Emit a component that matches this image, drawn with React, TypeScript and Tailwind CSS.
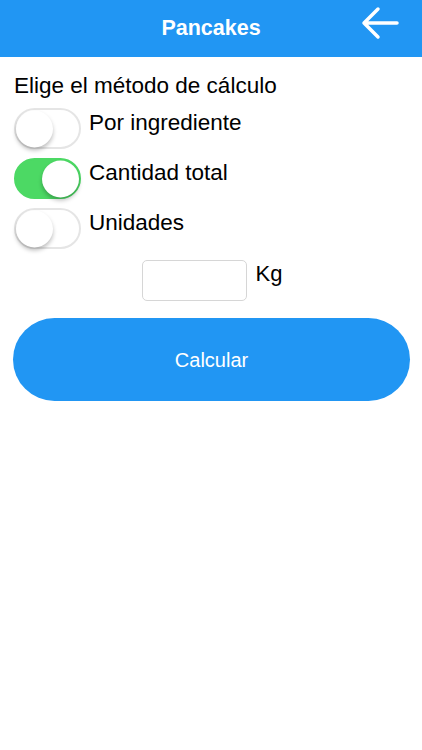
import { useState } from "react";

function Toggle({ on, onClick }: { on: boolean; onClick: () => void }) {
  return (
    <button
      onClick={onClick}
      className={`relative h-[41px] w-[67px] shrink-0 rounded-full border-2 transition-colors ${
        on ? "border-[#4cd964] bg-[#4cd964]" : "border-[#e5e5e5] bg-white"
      }`}
    >
      <span
        className={`absolute top-1/2 h-[37px] w-[37px] -translate-y-1/2 rounded-full bg-white shadow-[0_3px_4px_rgba(0,0,0,0.25)] ${
          on ? "right-0" : "left-0"
        }`}
      />
    </button>
  );
}

export default function App() {
  const [mode, setMode] = useState(1);
  const options = ["Por ingrediente", "Cantidad total", "Unidades"];

  return (
    <div className="min-h-[750px] bg-white font-['Liberation_Sans',Arial,sans-serif] text-black">
      {/* Header */}
      <header className="relative flex h-[57px] items-center justify-center bg-[#2196f3]">
        <h1 className="text-[21.5px] font-bold text-white">Pancakes</h1>
        <button className="absolute right-[23px] top-[6px]">
          <svg width="38" height="34" viewBox="0 0 38 34" fill="none" stroke="white" strokeWidth="3.5" strokeLinecap="round" strokeLinejoin="round">
            <path d="M36 17H3M17 3L3 17l14 14" />
          </svg>
        </button>
      </header>

      <div className="px-[14px] pt-[15px]">
        <p className="text-[22.5px] leading-[28px]">Elige el método de cálculo</p>

        <div className="mt-[8px] flex flex-col gap-[9px]">
          {options.map((label, i) => (
            <div key={label} className="flex items-start gap-[8px]">
              <Toggle on={mode === i} onClick={() => setMode(i)} />
              <span className="text-[22.5px] leading-[30px]">{label}</span>
            </div>
          ))}
        </div>

        <div className="mt-[11px] flex items-start justify-center gap-[9px] pl-[2px]">
          <input className="h-[41px] w-[105px] rounded-[5px] border border-[#d6d6d6] px-2 text-[18px] outline-none" />
          <span className="text-[22px] leading-[28px]">Kg</span>
        </div>

        <button className="mt-[17px] ml-[-1px] flex h-[83px] w-[397px] items-center justify-center rounded-full bg-[#2196f3] text-[20px] text-white">
          Calcular
        </button>
      </div>
    </div>
  );
}
